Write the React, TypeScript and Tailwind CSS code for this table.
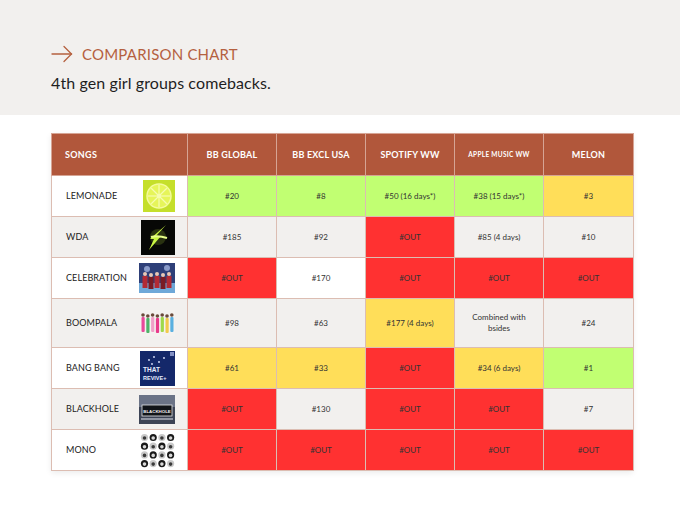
import React from "react";

type Tone = "g" | "r" | "y" | "w" | "s";

const toneClass: Record<Tone, string> = {
  g: "bg-[#c1ff72]",
  r: "bg-[#ff3131]",
  y: "bg-[#ffde59]",
  w: "bg-white",
  s: "bg-[#f2f0ee]",
};

const LemonArt = () => (
  <svg width="32" height="32" viewBox="0 0 32 32">
    <rect width="32" height="32" fill="#b5d21c" />
    <rect width="32" height="32" fill="#d6ec3a" opacity="0.5" />
    <circle cx="16" cy="16" r="12" fill="#e6f55a" stroke="#f4fb9c" strokeWidth="1.5" />
    {[0, 45, 90, 135].map((a) => (
      <line key={a} x1="16" y1="5" x2="16" y2="27" stroke="#f6fcb0" strokeWidth="1.2" transform={`rotate(${a} 16 16)`} />
    ))}
    <circle cx="16" cy="16" r="2" fill="#f6fcb0" />
  </svg>
);

const WdaArt = () => (
  <svg width="34" height="35" viewBox="0 0 34 35">
    <rect width="34" height="35" fill="#070806" />
    <circle cx="17" cy="17" r="8" fill="#c9f542" opacity="0.18" />
    <path d="M25 5 L15 16 L20 16 L8 30 L13 19 L9 19 Z" fill="#c9f542" />
    <path d="M10 17 Q17 15 26 18" stroke="#e8ff8a" strokeWidth="2" fill="none" />
  </svg>
);

const CelebrationArt = () => (
  <svg width="36" height="30" viewBox="0 0 36 30">
    <rect width="36" height="30" fill="#2e3f78" />
    <rect y="20" width="36" height="10" fill="#6fa8d8" />
    <circle cx="8" cy="6" r="3" fill="#c8d8ff" opacity="0.6" />
    <circle cx="28" cy="5" r="3" fill="#c8d8ff" opacity="0.6" />
    {[6, 12, 18, 24, 30].map((x, i) => (
      <g key={x}>
        <circle cx={x} cy={11 + (i % 2)} r="2" fill="#e9c7b5" />
        <rect x={x - 2.5} y={13 + (i % 2)} width="5" height="12" fill={i % 2 ? "#7a1b24" : "#b22a34"} />
      </g>
    ))}
  </svg>
);

const BoompalaArt = () => (
  <svg width="35" height="26" viewBox="0 0 35 26">
    <rect width="35" height="26" fill="#f4f2ef" />
    {["#e84a9a", "#4fb36a", "#f0a0c8", "#e83a8a", "#9ed94a", "#f2c94c", "#5ab0e0"].map((c, i) => (
      <g key={i}>
        <circle cx={3 + i * 4.8} cy={5 + (i % 2)} r="1.8" fill="#6b4a3a" />
        <rect x={1.5 + i * 4.8} y={7 + (i % 2)} width="3.2" height="15" rx="1" fill={c} />
      </g>
    ))}
  </svg>
);

const BangArt = () => (
  <svg width="35" height="35" viewBox="0 0 35 35">
    <rect width="35" height="35" fill="#14286a" />
    <rect x="30" y="1" width="4" height="4" fill="#c9d4ff" opacity="0.6" />
    {[[9, 9], [14, 6], [19, 11], [24, 7], [12, 13]].map(([x, y], i) => (
      <circle key={i} cx={x} cy={y} r="0.9" fill="#dfe6ff" />
    ))}
    <text x="3" y="21" fontSize="6.5" fontWeight="700" fill="#e8eeff" fontFamily="Liberation Sans, sans-serif">THAT</text>
    <text x="3" y="29" fontSize="5.5" fontWeight="700" fill="#e8eeff" fontFamily="Liberation Sans, sans-serif">REVIVE+</text>
  </svg>
);

const BlackholeArt = () => (
  <svg width="36" height="29" viewBox="0 0 36 29">
    <rect width="36" height="29" fill="#3d4455" />
    <rect width="36" height="12" fill="#6b7386" />
    <rect x="3" y="10" width="30" height="11" fill="#111418" stroke="#e6e6e6" strokeWidth="0.8" />
    <text x="18" y="17.5" fontSize="4.4" fontWeight="700" textAnchor="middle" fill="#f0f0f0" fontFamily="Liberation Sans, sans-serif">BLACKHOLE</text>
    <rect x="2" y="23" width="32" height="2" fill="#c8ccd6" opacity="0.6" />
  </svg>
);

const MonoArt = () => (
  <svg width="35" height="35" viewBox="0 0 35 35">
    <rect width="35" height="35" fill="#ffffff" />
    {[0, 1, 2, 3].map((r) =>
      [0, 1, 2, 3].map((c) => (
        <g key={`${r}-${c}`}>
          <circle cx={4.5 + c * 8.7} cy={4.5 + r * 8.7} r="3.6" fill={(r + c) % 2 ? "#1a1a1a" : "#c9c9c9"} />
          <circle cx={4.5 + c * 8.7} cy={5 + r * 8.7} r="1.8" fill={(r + c) % 2 ? "#d9d9d9" : "#3a3a3a"} />
        </g>
      ))
    )}
  </svg>
);

type Row = {
  song: string;
  bg: Tone;
  art: React.ReactNode;
  h: string;
  cells: [string, Tone][];
};

const rows: Row[] = [
  {
    song: "LEMONADE",
    bg: "w",
    art: <LemonArt />,
    h: "h-[41px]",
    cells: [["#20", "g"], ["#8", "g"], ["#50 (16 days*)", "g"], ["#38 (15 days*)", "g"], ["#3", "y"]],
  },
  {
    song: "WDA",
    bg: "s",
    art: <WdaArt />,
    h: "h-[41px]",
    cells: [["#185", "s"], ["#92", "s"], ["#OUT", "r"], ["#85 (4 days)", "s"], ["#10", "s"]],
  },
  {
    song: "CELEBRATION",
    bg: "w",
    art: <CelebrationArt />,
    h: "h-[41px]",
    cells: [["#OUT", "r"], ["#170", "w"], ["#OUT", "r"], ["#OUT", "r"], ["#OUT", "r"]],
  },
  {
    song: "BOOMPALA",
    bg: "s",
    art: <BoompalaArt />,
    h: "h-[49px]",
    cells: [["#98", "s"], ["#63", "s"], ["#177 (4 days)", "y"], ["Combined with bsides", "s"], ["#24", "s"]],
  },
  {
    song: "BANG BANG",
    bg: "w",
    art: <BangArt />,
    h: "h-[41px]",
    cells: [["#61", "y"], ["#33", "y"], ["#OUT", "r"], ["#34 (6 days)", "y"], ["#1", "g"]],
  },
  {
    song: "BLACKHOLE",
    bg: "s",
    art: <BlackholeArt />,
    h: "h-[41px]",
    cells: [["#OUT", "r"], ["#130", "s"], ["#OUT", "r"], ["#OUT", "r"], ["#7", "s"]],
  },
  {
    song: "MONO",
    bg: "w",
    art: <MonoArt />,
    h: "h-[41px]",
    cells: [["#OUT", "r"], ["#OUT", "r"], ["#OUT", "r"], ["#OUT", "r"], ["#OUT", "r"]],
  },
];

const App: React.FC = () => {
  return (
    <div className="w-[680px] h-[510px] bg-white font-['Lato',sans-serif] overflow-hidden">
      <div className="h-[115px] bg-[#f2f0ee] pl-[51px] pt-[43px]">
        <div className="flex items-center gap-[9px] h-[22px]">
          <svg width="22" height="20" viewBox="0 0 22 20" fill="none" stroke="#b5603f" strokeWidth="1.3" strokeLinecap="round">
            <line x1="1" y1="10" x2="20.5" y2="10" />
            <path d="M13 2.5 L20.5 10 L13 17.5" />
          </svg>
          <span className="text-[15px] leading-none text-[#b5603f] tracking-[0.2px]">COMPARISON CHART</span>
        </div>
        <div className="mt-[10px] text-[16px] leading-none text-[#1e1e1e] tracking-[0.1px]">4th gen girl groups comebacks.</div>
      </div>

      <div className="ml-[51px] mt-[18px] w-[582px] shadow-[0_2px_6px_rgba(0,0,0,0.08)]">
        <table className="w-[582px] table-fixed border-collapse text-[#333]">
          <colgroup>
            <col className="w-[136px]" />
            <col className="w-[89px]" />
            <col className="w-[89px]" />
            <col className="w-[89px]" />
            <col className="w-[89px]" />
            <col className="w-[90px]" />
          </colgroup>
          <thead>
            <tr className="h-[42px] bg-[#b1573b] text-white font-bold">
              <th className="border border-[#d6a494] text-left pl-[13px] text-[9px] tracking-[0.3px]">SONGS</th>
              <th className="border border-[#d6a494] text-[9px] tracking-[0.2px]">BB GLOBAL</th>
              <th className="border border-[#d6a494] text-[9px] tracking-[0.2px]">BB EXCL USA</th>
              <th className="border border-[#d6a494] text-[9px] tracking-[0.2px]">SPOTIFY WW</th>
              <th className="border border-[#d6a494] text-[6.5px] tracking-[0.3px]">APPLE MUSIC WW</th>
              <th className="border border-[#d6a494] text-[9px] tracking-[0.2px]">MELON</th>
            </tr>
          </thead>
          <tbody>
            {rows.map((row) => (
              <tr key={row.song} className={row.h}>
                <td className={`border border-[#dcbdb2] ${toneClass[row.bg]} p-0`}>
                  <div className="flex items-center justify-between pl-[14px] pr-[12px]">
                    <span className="text-[9px] text-[#222] tracking-[0.1px]">{row.song}</span>
                    {row.art}
                  </div>
                </td>
                {row.cells.map(([v, t], i) => (
                  <td
                    key={i}
                    className={`border border-[#dcbdb2] ${toneClass[t]} text-center text-[8px] leading-[11px] px-[12px]`}
                  >
                    {v}
                  </td>
                ))}
              </tr>
            ))}
          </tbody>
        </table>
      </div>
    </div>
  );
};

export default App;
